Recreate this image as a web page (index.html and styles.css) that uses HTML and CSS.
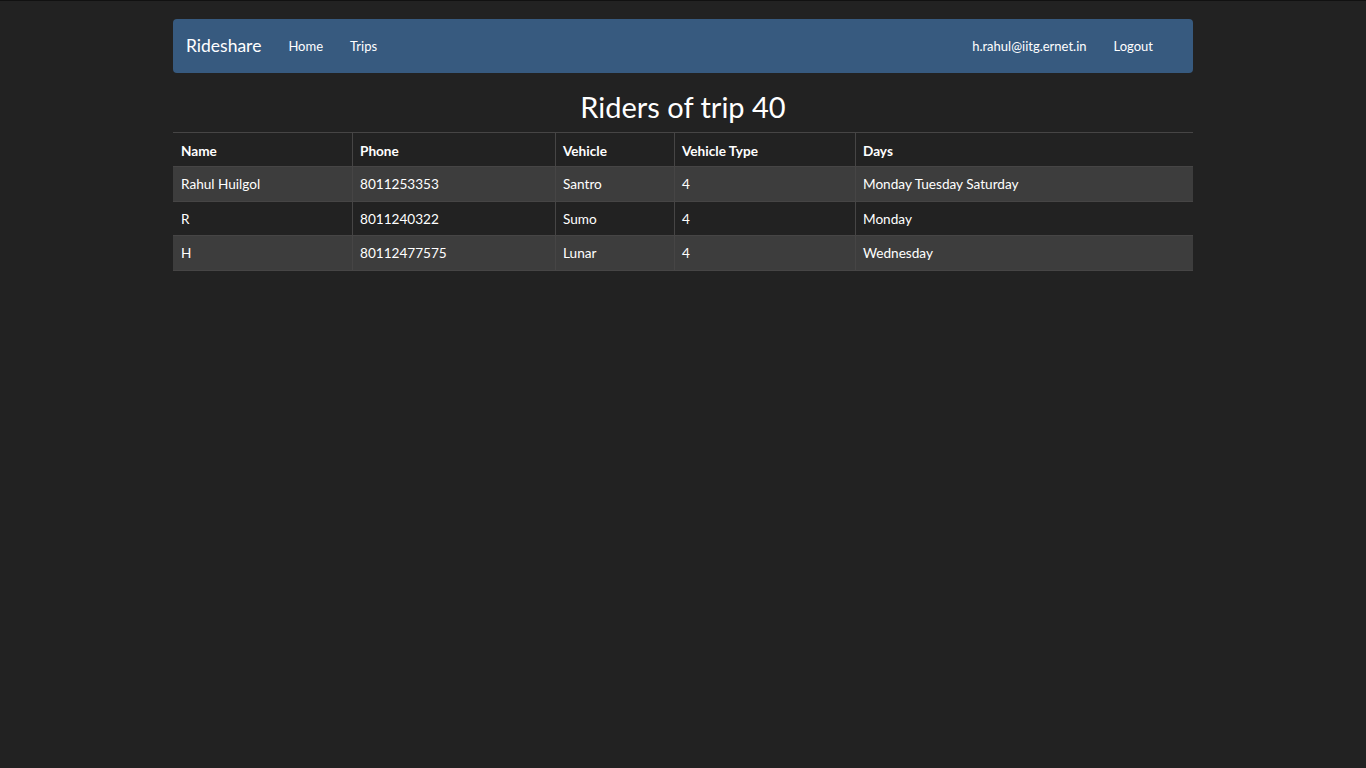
FILE: index.html
```html
<!DOCTYPE html>
<html>
<head>
<meta charset="utf-8">
<title>Rideshare</title>
<link rel="stylesheet" href="styles.css">
</head>
<body>
<div class="container">
  <nav class="navbar">
    <a class="brand" href="#">Rideshare</a>
    <ul class="nav">
      <li><a href="#">Home</a></li>
      <li><a href="#">Trips</a></li>
    </ul>
    <ul class="nav nav-right">
      <li><a href="#">h.rahul@iitg.ernet.in</a></li>
      <li><a href="#">Logout</a></li>
    </ul>
  </nav>
  <h1 class="title">Riders of trip 40</h1>
  <table class="table">
    <thead>
      <tr>
        <th class="c-name">Name</th>
        <th class="c-phone">Phone</th>
        <th class="c-vehicle">Vehicle</th>
        <th class="c-type">Vehicle Type</th>
        <th class="c-days">Days</th>
      </tr>
    </thead>
    <tbody>
      <tr><td>Rahul Huilgol</td><td>8011253353</td><td>Santro</td><td>4</td><td>Monday Tuesday Saturday</td></tr>
      <tr><td>R</td><td>8011240322</td><td>Sumo</td><td>4</td><td>Monday</td></tr>
      <tr><td>H</td><td>80112477575</td><td>Lunar</td><td>4</td><td>Wednesday</td></tr>
    </tbody>
  </table>
</div>
</body>
</html>
```
FILE: styles.css
```css
html, body {
  margin: 0;
  padding: 0;
}
body {
  background: #222222;
  color: #ffffff;
  font-family: Lato, "Open Sans", sans-serif;
  font-size: 14px;
  border-top: 1px solid #111111;
  min-height: 767px;
}
.container {
  width: 1020px;
  margin: 0 auto;
  padding-top: 18px;
}
.navbar {
  display: flex;
  align-items: center;
  height: 54px;
  background: #375a7f;
  border-radius: 4px;
  padding: 0 40px 2px 13px;
  box-sizing: border-box;
}
.brand {
  color: #ffffff;
  text-decoration: none;
  font-size: 17.5px;
  margin-right: 27px;
}
.nav {
  list-style: none;
  margin: 0;
  padding: 0;
  display: flex;
  gap: 27px;
}
.nav-right {
  margin-left: auto;
}
.nav a {
  color: #ffffff;
  text-decoration: none;
  font-size: 13px;
}
.title {
  margin: 0;
  padding: 16px 0 7px;
  text-align: center;
  font-weight: 400;
  font-size: 29px;
  line-height: 36px;
}
.table {
  width: 100%;
  border-collapse: collapse;
  border-spacing: 0;
}
.table th, .table td {
  text-align: left;
  padding: 9px 8px 7px 7px;
  line-height: 17.45px;
  font-size: 13.6px;
  border-top: 1px solid #464545;
  border-left: 1px solid #464545;
}
.table th:first-child, .table td:first-child {
  border-left: none;
  padding-left: 8px;
}
.table th {
  font-weight: 700;
  padding-top: 10px;
  padding-bottom: 6px;
}
.table tbody tr:nth-child(odd) {
  background: #3d3d3d;
}
.table tbody tr:last-child td {
  border-bottom: 1px solid #464545;
}
.c-name { width: 163px; }
.c-phone { width: 187px; }
.c-vehicle { width: 103px; }
.c-type { width: 165px; }
```
